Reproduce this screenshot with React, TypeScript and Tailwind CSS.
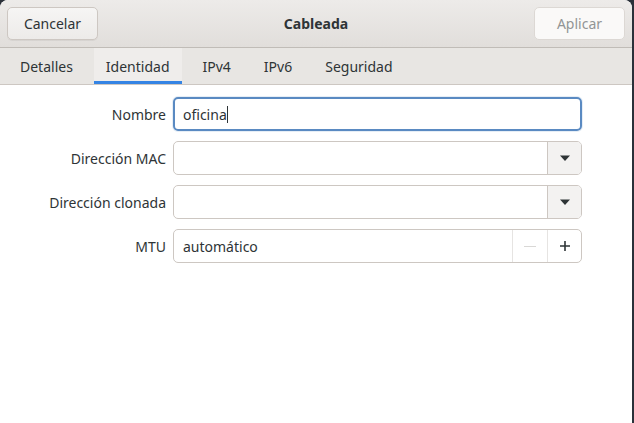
import { FC } from "react";

const font = { fontFamily: '"Noto Sans", "Open Sans", sans-serif' };

const tabs = ["Detalles", "Identidad", "IPv4", "IPv6", "Seguridad"];

const Caret: FC = () => (
  <svg width="12" height="8" viewBox="0 0 12 8">
    <path d="M1 1.5h10L6 7z" fill="#2e3436" />
  </svg>
);

const Row: FC<{ label: string; children: React.ReactNode }> = ({ label, children }) => (
  <div className="flex items-center h-[34px]">
    <div className="w-[166px] text-right text-[14px] text-[#2e3436]">{label}</div>
    <div className="ml-[7px] w-[409px] h-full">{children}</div>
  </div>
);

const App: FC = () => {
  return (
    <div className="w-[634px] h-[423px] bg-[#2b313a] overflow-hidden" style={font}>
      <div className="w-[632px] h-full bg-white rounded-t-[8px] overflow-hidden flex flex-col">
        {/* header bar */}
        <div className="h-[48px] shrink-0 bg-gradient-to-b from-[#edebe9] to-[#e1dedb] border-b border-[#c0bcb7] flex items-center justify-between px-[7px]">
          <button className="w-[91px] h-[33px] rounded-[5px] border border-[#cdc7c2] bg-gradient-to-b from-[#f6f5f4] to-[#edebe9] text-[14px] text-[#2e3436] shadow-[0_1px_0_rgba(0,0,0,0.05)]">
            Cancelar
          </button>
          <div className="text-[14px] font-bold text-[#2e3436]">Cableada</div>
          <button className="w-[91px] h-[33px] rounded-[5px] border border-[#dcd8d4] bg-[#faf9f8] text-[14px] text-[#929595]">
            Aplicar
          </button>
        </div>
        {/* tabs */}
        <div className="h-[37px] shrink-0 bg-[#e8e6e3] border-b border-[#cdc7c2] flex gap-[9px] pl-[8px]">
          {tabs.map((t) => {
            const active = t === "Identidad";
            return (
              <div
                key={t}
                className={
                  active
                    ? "h-full px-[12px] flex items-center text-[14px] text-[#2e3436] bg-[#efedeb] border-b-[3px] border-[#3584e4] pt-[3px]"
                    : "h-full px-[12px] flex items-center text-[14px] text-[#2e3436]"
                }
              >
                {t}
              </div>
            );
          })}
        </div>
        {/* content */}
        <div className="flex flex-col gap-[10px] pt-[12px]">
          <Row label="Nombre">
            <div className="h-full rounded-[5px] border-2 border-[#5a8ac2] flex items-center px-[8px] text-[14px] text-[#2e3436] shadow-[0_0_0_1px_rgba(90,138,194,0.15)]">
              oficina<span className="inline-block w-px h-[17px] bg-[#2e3436]" />
            </div>
          </Row>
          <Row label="Dirección MAC">
            <div className="h-full rounded-[5px] border border-[#cdc7c2] flex overflow-hidden">
              <div className="flex-1" />
              <div className="w-[34px] border-l border-[#cdc7c2] bg-[#f3f2f1] flex items-center justify-center">
                <Caret />
              </div>
            </div>
          </Row>
          <Row label="Dirección clonada">
            <div className="h-full rounded-[5px] border border-[#cdc7c2] flex overflow-hidden">
              <div className="flex-1" />
              <div className="w-[34px] border-l border-[#cdc7c2] bg-[#f3f2f1] flex items-center justify-center">
                <Caret />
              </div>
            </div>
          </Row>
          <Row label="MTU">
            <div className="h-full rounded-[5px] border border-[#cdc7c2] flex overflow-hidden">
              <div className="flex-1 flex items-center px-[9px] text-[14px] text-[#2e3436]">automático</div>
              <div className="w-[35px] border-l border-[#e6e4e2] flex items-center justify-center">
                <div className="w-[12px] h-[1px] bg-[#d9d8d6]" />
              </div>
              <div className="w-[34px] border-l border-[#e6e4e2] flex items-center justify-center">
                <svg width="12" height="12" viewBox="0 0 12 12">
                  <path d="M6 1v10M1 6h10" stroke="#2e3436" strokeWidth="1.6" />
                </svg>
              </div>
            </div>
          </Row>
        </div>
      </div>
    </div>
  );
};

export default App;
